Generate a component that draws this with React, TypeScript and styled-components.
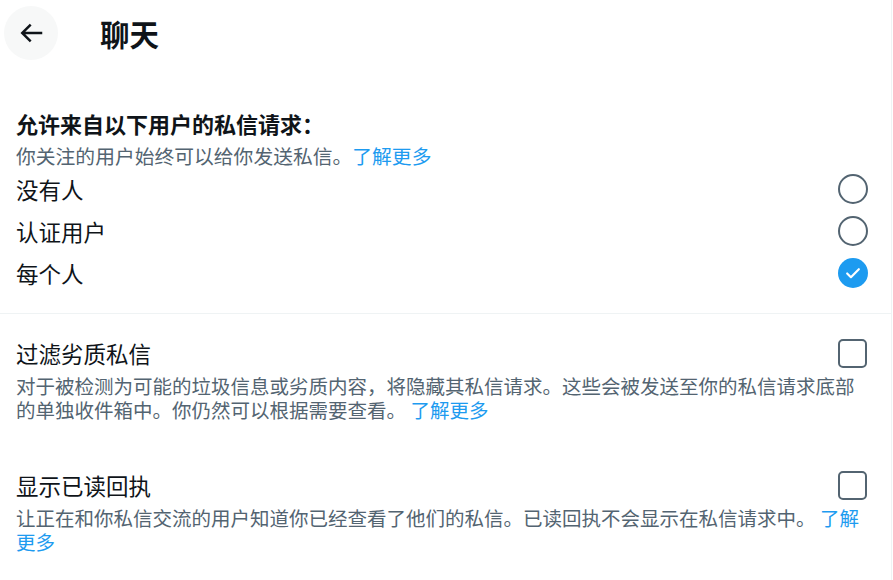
import React from "react";
import styled, { createGlobalStyle } from "styled-components";

const Global = createGlobalStyle`
  html, body { margin: 0; padding: 0; background: #ffffff; }
  body {
    font-family: "Noto Sans CJK SC", "Noto Sans", sans-serif;
    color: #0f1419;
  }
  * { box-sizing: border-box; }
`;

const Page = styled.div`
  width: 892px;
  min-height: 580px;
  border-right: 1px solid #eff3f4;
  background: #fff;
`;

const Header = styled.header`
  height: 66px;
  display: flex;
  align-items: center;
  padding-left: 4px;
`;

const BackButton = styled.button`
  width: 54px;
  height: 54px;
  border-radius: 50%;
  border: none;
  background: #f7f8f8;
  display: flex;
  align-items: center;
  justify-content: center;
  padding: 0;
  cursor: pointer;
  color: #0f1419;
`;

const Title = styled.h1`
  margin: 0 0 0 42px;
  font-size: 29.5px;
  font-weight: 700;
  line-height: 36px;
  color: #0f1419;
`;

const Section = styled.section<{ $pt: number; $pb: number }>`
  padding: ${(p) => p.$pt}px 24px ${(p) => p.$pb}px 16px;
  display: flex;
  flex-direction: column;
`;

const Heading = styled.h2`
  margin: 0;
  font-size: 22px;
  font-weight: 700;
  line-height: 28px;
`;

const Description = styled.p<{ $mt: number }>`
  margin: ${(p) => p.$mt}px 0 0;
  font-size: 19.8px;
  line-height: 24px;
  color: #536471;
`;

const Link = styled.a`
  color: #1d9bf0;
  text-decoration: none;
`;

const OptionRow = styled.label`
  height: 42px;
  display: flex;
  align-items: center;
  justify-content: space-between;
  font-size: 22.5px;
  line-height: 30px;
  color: #0f1419;
`;

const Radio = styled.span<{ $checked?: boolean }>`
  width: 30px;
  height: 30px;
  border-radius: 50%;
  margin-right: -1px;
  border: ${(p) => (p.$checked ? "none" : "2.5px solid #536471")};
  background: ${(p) => (p.$checked ? "#1d9bf0" : "transparent")};
  display: flex;
  align-items: center;
  justify-content: center;
`;

const Divider = styled.hr`
  margin: 0;
  border: none;
  height: 1px;
  background: #eff3f4;
`;

const SettingItem = styled.div<{ $mt: number }>`
  margin-top: ${(p) => p.$mt}px;
  display: flex;
  flex-direction: column;
`;

const SettingTop = styled.div`
  display: flex;
  align-items: center;
  justify-content: space-between;
  height: 30px;
`;

const SettingLabel = styled.span`
  font-size: 22.5px;
  line-height: 30px;
  color: #0f1419;
`;

const Checkbox = styled.span`
  width: 29px;
  height: 29px;
  border-radius: 5px;
  border: 2.5px solid #536471;
`;

const SettingText = styled.p`
  margin: 6px 0 0;
  width: 850px;
  font-size: 19.5px;
  line-height: 24px;
  color: #536471;
`;

export default function App() {
  return (
    <Page>
      <Global />
      <Header>
        <BackButton aria-label="返回">
          <svg width="30" height="30" viewBox="0 0 24 24" fill="currentColor">
            <path d="M7.414 13l5.043 5.04-1.414 1.42L3.586 12l7.457-7.46 1.414 1.42L7.414 11H21v2H7.414z" />
          </svg>
        </BackButton>
        <Title>聊天</Title>
      </Header>

      <Section $pt={43} $pb={19}>
        <Heading>允许来自以下用户的私信请求：</Heading>
        <Description $mt={7}>
          你关注的用户始终可以给你发送私信。<Link href="#">了解更多</Link>
        </Description>
        <OptionRow>
          没有人
          <Radio />
        </OptionRow>
        <OptionRow>
          认证用户
          <Radio />
        </OptionRow>
        <OptionRow>
          每个人
          <Radio $checked>
            <svg width="20" height="20" viewBox="0 0 24 24" fill="none">
              <path d="M5 12.5l4.5 4.5L19 7.5" stroke="#fff" strokeWidth="2.6" strokeLinecap="round" strokeLinejoin="round" />
            </svg>
          </Radio>
        </OptionRow>
      </Section>

      <Divider />

      <Section $pt={24} $pb={30}>
        <SettingItem $mt={0}>
          <SettingTop>
            <SettingLabel>过滤劣质私信</SettingLabel>
            <Checkbox />
          </SettingTop>
          <SettingText>
            对于被检测为可能的垃圾信息或劣质内容，将隐藏其私信请求。这些会被发送至你的私信请求底部的单独收件箱中。你仍然可以根据需要查看。 <Link href="#">了解更多</Link>
          </SettingText>
        </SettingItem>
        <SettingItem $mt={48}>
          <SettingTop>
            <SettingLabel>显示已读回执</SettingLabel>
            <Checkbox />
          </SettingTop>
          <SettingText>
            让正在和你私信交流的用户知道你已经查看了他们的私信。已读回执不会显示在私信请求中。 <Link href="#">了解更多</Link>
          </SettingText>
        </SettingItem>
      </Section>
    </Page>
  );
}
